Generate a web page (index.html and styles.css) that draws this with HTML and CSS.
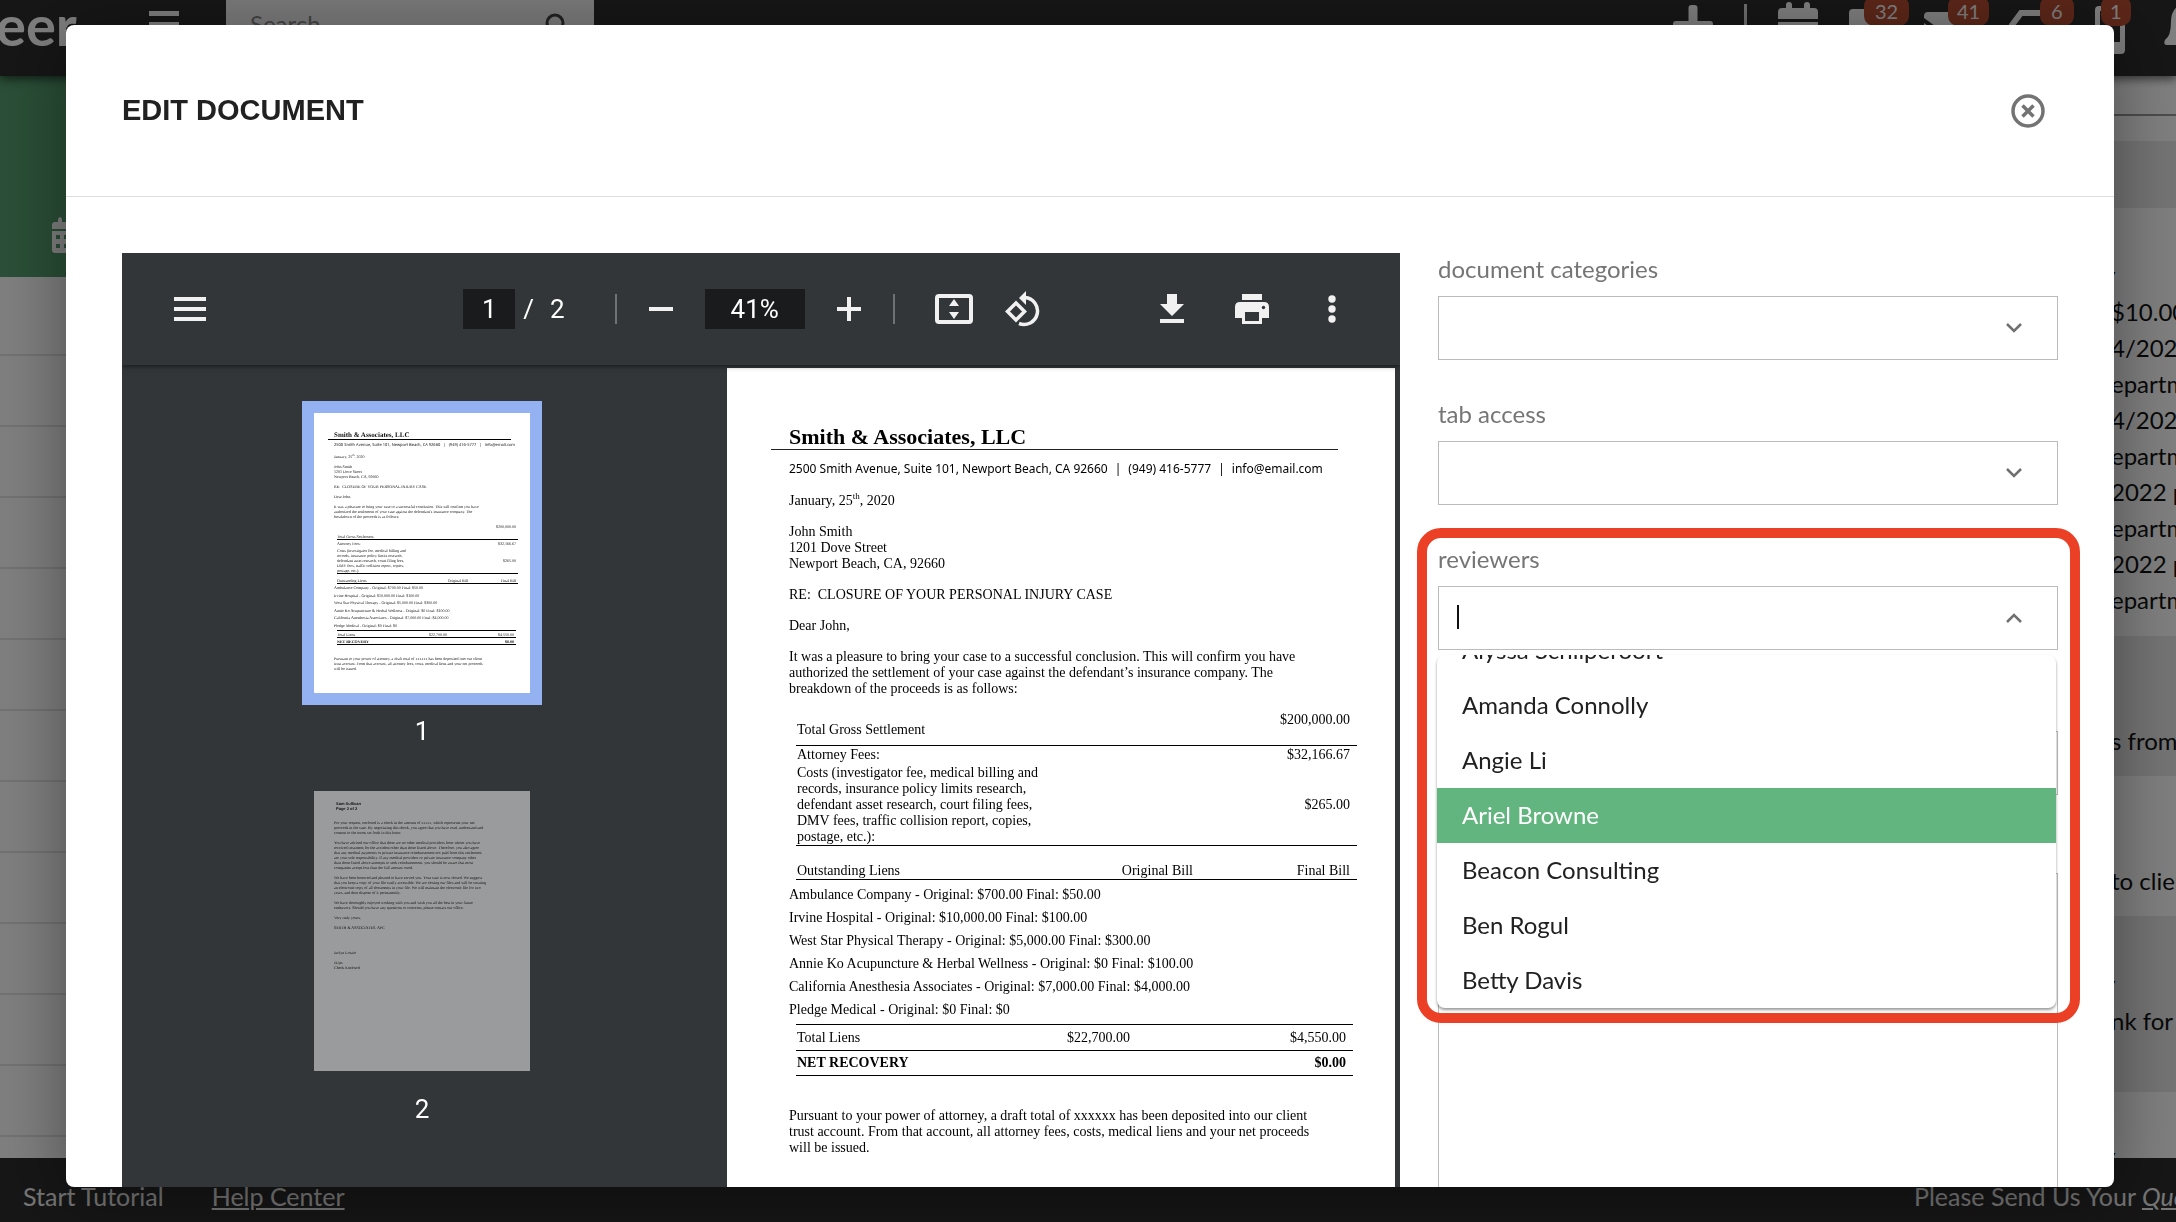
FILE: index.html
```html
<!DOCTYPE html>
<html lang="en">
<head>
    <meta charset="UTF-8">
    <title>Edit Document</title>
    <link rel="stylesheet" href="styles.css">
</head>
<body>
    <div class="app">
        <header class="topbar">
            <div class="logo">eer</div>
            <button class="top-icon menu-toggle" aria-label="Menu">
                <svg width="30" height="28" viewBox="0 0 30 28" fill="#fff"><path d="M0 0h30v5H0zM0 11h30v5H0zM0 22h30v5H0z"/></svg>
            </button>
            <div class="search">
                <input type="text" placeholder="Search" aria-label="Search">
                <svg width="26" height="30" viewBox="0 0 26 30" fill="none" stroke="#444" stroke-width="3"><circle cx="11" cy="10" r="8"/><path d="M16 17l8 9"/></svg>
            </div>
            <div class="top-actions">
                <button class="top-icon" aria-label="Add">
                    <svg width="40" height="56" viewBox="0 0 40 56" fill="#fff"><rect x="15.500" y="5" width="9" height="41" rx="3"/><rect x="0" y="21" width="40" height="9" rx="3"/></svg>
                </button>
                <span class="top-divider"></span>
                <button class="top-icon" aria-label="Calendar">
                    <svg width="40" height="56" viewBox="0 0 40 56" fill="#fff"><path d="M4 8h4V5a2 2 0 0 1 6 0v3h12V5a2 2 0 0 1 6 0v3h4q4 0 4 4v7H0v-7q0-4 4-4zM0 22h40v18q0 4-4 4H4q-4 0-4-4z"/></svg>
                </button>
                <button class="top-icon" aria-label="Messages">
                    <svg width="44" height="56" viewBox="0 0 44 56" fill="#fff"><path d="M4 9h36q4 0 4 4v22q0 4-4 4H18L8 48v-9H4q-4 0-4-4V13q0-4 4-4z"/></svg>
                    <span class="badge">32</span>
                </button>
                <button class="top-icon" aria-label="Mail">
                    <svg width="44" height="56" viewBox="0 0 44 56" fill="#fff"><path d="M4 12h36q4 0 4 4v2L22 34 0 18v-2q0-4 4-4zM0 23l22 16 22-16v21H0z"/></svg>
                    <span class="badge badge-mail">41</span>
                </button>
                <button class="top-icon" aria-label="Tasks">
                    <svg width="65" height="56" viewBox="0 0 65 56" fill="none" stroke="#fff" stroke-width="6"><path d="M4 42l9-17 9-12h35v30z"/></svg>
                    <span class="badge badge-tasks">6</span>
                </button>
                <button class="top-icon" aria-label="Texts">
                    <svg width="30" height="56" viewBox="0 0 30 56" fill="none"><path fill="#fff" fill-rule="evenodd" d="M4 6h22q4 0 4 4v40q0 4-4 4H4q-4 0-4-4V10q0-4 4-4zM5 11v31h20V11z"/><circle cx="15" cy="48" r="3" fill="#2d2d2d"/></svg>
                    <span class="badge badge-texts">1</span>
                </button>
                <button class="top-icon" aria-label="Alerts">
                    <svg width="48" height="56" viewBox="0 0 48 56" fill="#fff"><path d="M27 4q-12 3-12 18 0 14-6 18-2 5 2 5h32q4 0 2-5-6-4-6-18 0-15-12-18z"/></svg>
                </button>
            </div>
        </header>

        <div class="page">
            <nav class="side-nav">
                <div class="side-head">
                    <svg width="32" height="36" viewBox="0 0 32 36" fill="#fff"><path fill-rule="evenodd" d="M3 5h3V2q2-4 4 0v3h12V2q2-4 4 0v3h3q3 0 3 3v4H0V8q0-3 3-3zM0 14h32v19q0 3-3 3H3q-3 0-3-3zM4 18v4h4v-4zM12 18v4h4v-4zM20 18v4h4v-4zM4 27v4h4v-4zM12 27v4h4v-4zM20 27v4h4v-4z"/></svg>
                </div>
                <ul class="side-rows">
                    <li></li><li></li><li></li><li></li><li></li><li></li>
                    <li></li><li></li><li></li><li></li><li></li><li></li>
                </ul>
            </nav>
            <section class="activity">
                <div class="activity-head"></div>
                <div class="activity-tabs"></div>
                <div class="entry entry-long">
                    <b>y</b>
                    <p>$10.00</p>
                    <p>4/2023</p>
                    <p>epartment</p>
                    <p>4/2021</p>
                    <p>epartment</p>
                    <p>2022 pa</p>
                    <p>epartment</p>
                    <p>2022 pa</p>
                    <p>epartment</p>
                </div>
                <div class="entry entry-alt"><p>s from</p></div>
                <div class="entry"><p>to client</p></div>
                <div class="entry entry-alt entry-tall"><b>y</b><p>nk for</p></div>
                <div class="entry entry-last"><b>y</b></div>
            </section>
        </div>

        <footer class="bottombar">
            <span>Start Tutorial</span>
            <a href="#">Help Center</a>
            <span class="feedback">Please Send Us Your <a href="#"><i>Questions</i></a></span>
        </footer>
    </div>

    <div class="overlay">
        <div class="modal" role="dialog" aria-labelledby="modal-title">
            <div class="modal-header">
                <h1 id="modal-title">EDIT DOCUMENT</h1>
                <button class="close" aria-label="Close">
                    <svg width="34" height="34" viewBox="0 0 34 34" fill="none" stroke="#737373"><circle cx="17" cy="17" r="15" stroke-width="3.500"/><path stroke-width="3.500" d="M11.500 11.500l11 11M22.500 11.500l-11 11"/></svg>
                </button>
            </div>

            <div class="modal-body">
                <!-- pdf viewer -->
                <div class="viewer">
                    <div class="toolbar">
                        <div class="tools-left">
                            <button aria-label="Toggle sidebar"><svg width="32" height="24" viewBox="0 0 32 24" fill="#f1f1f1"><path d="M0 0h32v4H0zM0 10h32v4H0zM0 20h32v4H0z"/></svg></button>
                        </div>
                        <div class="tools-center">
                            <input class="page-input" type="text" value="1" aria-label="Page">
                            <span class="slash">/</span>
                            <span class="page-total">2</span>
                            <span class="tool-divider"></span>
                            <button aria-label="Zoom out"><svg width="24" height="24" viewBox="0 0 24 24" fill="#f1f1f1"><path d="M0 10h24v4H0z"/></svg></button>
                            <input class="zoom-input" type="text" value="41%" aria-label="Zoom">
                            <button aria-label="Zoom in"><svg width="24" height="24" viewBox="0 0 24 24" fill="#f1f1f1"><path d="M10 0h4v10h10v4H14v10h-4V14H0v-4h10z"/></svg></button>
                            <span class="tool-divider"></span>
                            <button class="fit" aria-label="Fit to page"><svg width="38" height="30" viewBox="0 0 38 30" fill="#f1f1f1"><rect x="2" y="2" width="34" height="26" rx="2" fill="none" stroke="#f1f1f1" stroke-width="4"/><path d="M19 5l5 7H14zM19 25l5-7H14z"/></svg></button>
                            <button class="rotate" aria-label="Rotate"><svg width="36" height="36" viewBox="0 0 36 36" fill="none" stroke="#f1f1f1" stroke-width="3.500"><path d="M11 12l8.500 8.500L11 29l-8.500-8.500z"/><path d="M20 6.500a13.500 13.500 0 1 1-6 26"/><path d="M21 0v14l-7-7z" fill="#f1f1f1" stroke="none"/></svg></button>
                        </div>
                        <div class="tools-right">
                            <button aria-label="Download"><svg width="24" height="30" viewBox="0 0 24 30" fill="#f1f1f1"><path d="M7 0h10v10h7L12 22 0 10h7zM0 25h24v4H0z"/></svg></button>
                            <button aria-label="Print"><svg width="34" height="30" viewBox="0 0 34 30" fill="#f1f1f1"><path d="M7 0h20v6H7z"/><path fill-rule="evenodd" d="M5 8h24q5 0 5 5v11h-7v6H7v-6H0V13q0-5 5-5zM10 18v9h14v-9z"/><circle cx="28.500" cy="13.500" r="1.700" fill="#323639"/></svg></button>
                            <button aria-label="More"><svg width="8" height="28" viewBox="0 0 8 28" fill="#f1f1f1"><circle cx="4" cy="4" r="3.700"/><circle cx="4" cy="14" r="3.700"/><circle cx="4" cy="24" r="3.700"/></svg></button>
                        </div>
                    </div>

                    <div class="viewer-body">
                        <aside class="thumbs">
                            <figure class="thumb selected">
                                <div class="mini">
                                    <h3>Smith &amp; Associates, LLC</h3>
                                    <p class="mini-address">2500 Smith Avenue, Suite 101, Newport Beach, CA 92660 &nbsp; | &nbsp; (949) 416-5777 &nbsp; | &nbsp; info@email.com</p>
                                    <p>January, 25<sup>th</sup>, 2020</p>
                                    <p>John Smith<br>1201 Dove Street<br>Newport Beach, CA, 92660</p>
                                    <p>RE: &nbsp;CLOSURE OF YOUR PERSONAL INJURY CASE</p>
                                    <p>Dear John,</p>
                                    <p>It was a pleasure to bring your case to a successful conclusion. This will confirm you have<br>authorized the settlement of your case against the defendant’s insurance company. The<br>breakdown of the proceeds is as follows:</p>
                                    <table>
                                        <tr class="gross ruled"><td>Total Gross Settlement</td><td></td><td>$200,000.00</td></tr>
                                        <tr class="fees"><td>Attorney Fees:</td><td></td><td>$32,166.67</td></tr>
                                        <tr class="costs ruled"><td>Costs (investigator fee, medical billing and<br>records, insurance policy limits research,<br>defendant asset research, court filing fees,<br>DMV fees, traffic collision report, copies,<br>postage, etc.):</td><td></td><td>$265.00</td></tr>
                                        <tr class="liens-head ruled"><td>Outstanding Liens</td><td>Original Bill</td><td>Final Bill</td></tr>
                                    </table>
                                    <ul>
                                        <li>Ambulance Company - Original: $700.00 Final: $50.00</li>
                                        <li>Irvine Hospital - Original: $10,000.00 Final: $100.00</li>
                                        <li>West Star Physical Therapy - Original: $5,000.00 Final: $300.00</li>
                                        <li>Annie Ko Acupuncture &amp; Herbal Wellness - Original: $0 Final: $100.00</li>
                                        <li>California Anesthesia Associates - Original: $7,000.00 Final: $4,000.00</li>
                                        <li>Pledge Medical - Original: $0 Final: $0</li>
                                    </ul>
                                    <table class="totals">
                                        <tr class="ruled"><td>Total Liens</td><td>$22,700.00</td><td>$4,550.00</td></tr>
                                        <tr class="ruled net"><td>NET RECOVERY</td><td></td><td>$0.00</td></tr>
                                    </table>
                                    <p>Pursuant to your power of attorney, a draft total of xxxxxx has been deposited into our client<br>trust account. From that account, all attorney fees, costs, medical liens and your net proceeds<br>will be issued.</p>
                                </div>
                                <figcaption>1</figcaption>
                            </figure>
                            <figure class="thumb">
                                <div class="mini mini-second">
                                    <p class="mini-top">Sam Sullivan<br>Page 2 of 2</p>
                                    <p>Per your request, enclosed is a check in the amount of xxxxx, which represents your net<br>proceeds in the case. By negotiating this check, you agree that you have read, understand and<br>consent to the terms set forth in this letter.</p>
                                    <p>You have advised our office that there are no other medical providers from whom you have<br>received treatment for the accident other than those listed above. Therefore, you also agree<br>that any medical payments or private insurance reimbursement not paid from this settlement<br>are your sole responsibility. If any medical providers or private insurance company other<br>than those listed above attempts to seek reimbursement, you should be aware that most<br>companies accept less than the full amount owed.</p>
                                    <p>We have been honored and pleased to have served you. Your case is now closed. We suggest<br>that you keep a copy of your file easily accessible. We are closing our files and will be creating<br>an electronic copy of all documents in your file. We will maintain the electronic file for two<br>years, and then dispose of it permanently.</p>
                                    <p>We have thoroughly enjoyed working with you and wish you all the best in your future<br>endeavors. Should you have any questions or concerns, please contact our office.</p>
                                    <p>Very truly yours,</p>
                                    <p class="mini-firm">SMITH &amp; ASSOCIATES, APC</p>
                                    <p>Jaclyn Loraio</p>
                                    <p>JL/ps<br>Check Enclosed</p>
                                </div>
                                <figcaption>2</figcaption>
                            </figure>
                        </aside>

                        <article class="letter">
                            <h2>Smith &amp; Associates, LLC</h2>
                            <p class="address"><span>2500 Smith Avenue, Suite 101, Newport Beach, CA 92660</span><span>|</span><span>(949) 416-5777</span><span>|</span><span>info@email.com</span></p>
                            <p>January, 25<sup>th</sup>, 2020</p>
                            <p>John Smith<br>1201 Dove Street<br>Newport Beach, CA, 92660</p>
                            <p>RE: &nbsp;CLOSURE OF YOUR PERSONAL INJURY CASE</p>
                            <p>Dear John,</p>
                            <p>It was a pleasure to bring your case to a successful conclusion. This will confirm you have<br>authorized the settlement of your case against the defendant’s insurance company. The<br>breakdown of the proceeds is as follows:</p>
                            <table>
                                <tr class="gross ruled"><td>Total Gross Settlement</td><td></td><td>$200,000.00</td></tr>
                                <tr class="fees"><td>Attorney Fees:</td><td></td><td>$32,166.67</td></tr>
                                <tr class="costs ruled"><td>Costs (investigator fee, medical billing and<br>records, insurance policy limits research,<br>defendant asset research, court filing fees,<br>DMV fees, traffic collision report, copies,<br>postage, etc.):</td><td></td><td>$265.00</td></tr>
                                <tr class="liens-head ruled"><td>Outstanding Liens</td><td>Original Bill</td><td>Final Bill</td></tr>
                            </table>
                            <ul>
                                <li>Ambulance Company - Original: $700.00 Final: $50.00</li>
                                <li>Irvine Hospital - Original: $10,000.00 Final: $100.00</li>
                                <li>West Star Physical Therapy - Original: $5,000.00 Final: $300.00</li>
                                <li>Annie Ko Acupuncture &amp; Herbal Wellness - Original: $0 Final: $100.00</li>
                                <li>California Anesthesia Associates - Original: $7,000.00 Final: $4,000.00</li>
                                <li>Pledge Medical - Original: $0 Final: $0</li>
                            </ul>
                            <table class="totals">
                                <tr class="ruled"><td>Total Liens</td><td>$22,700.00</td><td>$4,550.00</td></tr>
                                <tr class="ruled net"><td>NET RECOVERY</td><td></td><td>$0.00</td></tr>
                            </table>
                            <p>Pursuant to your power of attorney, a draft total of xxxxxx has been deposited into our client<br>trust account. From that account, all attorney fees, costs, medical liens and your net proceeds<br>will be issued.</p>
                        </article>
                    </div>
                </div>

                <!-- document fields -->
                <form class="fields">
                    <div class="field">
                        <label for="categories">document categories</label>
                        <div class="control">
                            <select id="categories"><option></option></select>
                            <svg class="chevron" width="16" height="10" viewBox="0 0 16 10" fill="none" stroke="#707070" stroke-width="2.500"><path d="M1 1l7 7 7-7"/></svg>
                        </div>
                    </div>
                    <div class="field">
                        <label for="tabs">tab access</label>
                        <div class="control">
                            <select id="tabs"><option></option></select>
                            <svg class="chevron" width="16" height="10" viewBox="0 0 16 10" fill="none" stroke="#707070" stroke-width="2.500"><path d="M1 1l7 7 7-7"/></svg>
                        </div>
                    </div>
                    <div class="field highlighted">
                        <label for="reviewers">reviewers</label>
                        <div class="control">
                            <input id="reviewers" type="text" role="combobox" aria-expanded="true" aria-controls="reviewer-list">
                            <span class="caret"></span>
                            <svg class="chevron" width="16" height="10" viewBox="0 0 16 10" fill="none" stroke="#707070" stroke-width="2.500"><path d="M1 9l7-7 7 7"/></svg>
                            <ul class="options" id="reviewer-list" role="listbox">
                                <li role="option">Alyssa Schilperoort</li>
                                <li role="option">Amanda Connolly</li>
                                <li role="option">Angie Li</li>
                                <li role="option" class="active" aria-selected="true">Ariel Browne</li>
                                <li role="option">Beacon Consulting</li>
                                <li role="option">Ben Rogul</li>
                                <li role="option">Betty Davis</li>
                            </ul>
                        </div>
                    </div>
                    <div class="field unlabelled">
                        <div class="control"><input type="text" aria-label="Title"></div>
                    </div>
                    <div class="field unlabelled notes">
                        <textarea aria-label="Notes"></textarea>
                    </div>
                </form>
            </div>
        </div>
    </div>
</body>
</html>
```
FILE: styles.css
```css
* {
    box-sizing: border-box;
}
body {
    margin: 0;
    height: 100vh;
    overflow: hidden;
    font-family: Lato, sans-serif;
    font-size: 24px;
    line-height: 36px;
    color: #212121;
    background: #fff;
}
p, h1, h2, h3, ul, figure {
    margin: 0;
    padding: 0;
}
ul {
    list-style: none;
}
button {
    border: 0;
    padding: 0;
    background: none;
    cursor: pointer;
}
svg {
    display: block;
    flex-shrink: 0;
}

/* page behind the dialog */
.app {
    height: 100vh;
    display: flex;
    flex-direction: column;
    overflow: hidden;
}
.topbar {
    display: flex;
    align-items: flex-start;
    height: 76px;
    flex-shrink: 0;
    background: #2d2d2d;
    box-shadow: 0 3px 9px rgba(0, 0, 0, 0.6);
    position: relative;
    z-index: 1;
}
.logo {
    width: 153px;
    margin-left: -4px;
    font-size: 56px;
    font-weight: bold;
    line-height: 50px;
    color: #fff;
}
.top-icon {
    position: relative;
}
.menu-toggle {
    padding-top: 11px;
    margin-right: 47px;
}
.search {
    display: flex;
    width: 368px;
    padding: 13px 24px 10px;
    background: #f7f7f7;
}
.search input {
    flex: 1;
    min-width: 0;
    border: 0;
    padding: 0;
    height: 21px;
    font: 24px/21px Lato, sans-serif;
    background: none;
}
.search input::placeholder {
    color: #8a8a8a;
}
.top-actions {
    display: flex;
    gap: 31px;
    margin-left: auto;
    margin-right: -28px;
}
.top-divider {
    width: 3px;
    height: 44px;
    margin-top: 4px;
    background: #ddd;
}
.badge {
    position: absolute;
    top: -4px;
    left: 15px;
    min-width: 29px;
    padding: 0 11px;
    border-radius: 10px;
    font: 20px/30px Lato, sans-serif;
    color: #fff;
    background: #ba4e32;
}
.badge-mail {
    left: 24px;
    padding: 0 9px;
}
.badge-tasks {
    left: 41px;
}
.badge-texts {
    left: 6px;
    padding: 0 9px;
}
.page {
    flex: 1;
    min-height: 0;
    display: flex;
    justify-content: space-between;
    overflow: hidden;
}
.side-nav {
    width: 330px;
}
.side-head {
    height: 201px;
    padding: 141px 52px 0;
    background: #559e6f;
}
.side-rows {
    padding-top: 8px;
}
.side-rows li {
    height: 71px;
    border-bottom: 2px solid #e4e4e4;
}
.activity {
    width: 276px;
    white-space: nowrap;
    overflow: hidden;
    color: #111;
}
.activity-head {
    height: 40px;
    border-bottom: 2px solid #999;
}
.activity-tabs {
    height: 92px;
    margin-top: 25px;
    border-bottom: 25px solid #fff;
    background: #e8e8e8;
}
.entry {
    height: 140px;
    padding: 87px 0 0 211px;
}
.entry b {
    display: block;
    margin-left: -8px;
    font-style: italic;
}
.entry-long {
    height: 403px;
    padding-top: 25px;
}
.entry-alt {
    background: #e8e8e8;
}
.entry-tall {
    height: 176px;
    padding-top: 51px;
}
.entry-last {
    padding-top: 47px;
}
.bottombar {
    display: flex;
    gap: 48px;
    height: 64px;
    padding: 20px 0 0 23px;
    flex-shrink: 0;
    font-size: 25px;
    color: #eee;
    background: #2d2d2d;
    white-space: nowrap;
}
.bottombar a {
    color: #eee;
}
.feedback {
    width: 262px;
    margin-left: auto;
    overflow: hidden;
}

/* dialog */
.overlay {
    position: fixed;
    inset: 0;
    z-index: 10;
    display: flex;
    padding: 25px 62px 35px 66px;
    background: rgba(0, 0, 0, 0.5);
}
.modal {
    flex: 1;
    min-width: 0;
    display: flex;
    flex-direction: column;
    overflow: hidden;
    border-radius: 8px;
    background: #fff;
    box-shadow: 0 10px 70px rgba(0, 0, 0, 0.4);
}
.modal-header {
    display: flex;
    align-items: center;
    justify-content: space-between;
    height: 172px;
    padding: 0 69px 0 56px;
    flex-shrink: 0;
    border-bottom: 1px solid #dedede;
}
.modal-header h1 {
    padding-bottom: 2px;
    font: bold 29px/36px "Liberation Sans", Arial, sans-serif;
}
.modal-body {
    flex: 1;
    min-height: 0;
    display: flex;
    gap: 38px;
    padding: 56px 56px 0;
}

/* pdf viewer */
.viewer {
    flex: 1278 1 0;
    min-width: 0;
    display: flex;
    flex-direction: column;
    overflow: hidden;
    background: #323639;
}
.toolbar {
    display: flex;
    align-items: center;
    height: 112px;
    flex-shrink: 0;
    color: #fff;
    font: 26px/40px Roboto, sans-serif;
    box-shadow: 0 1px 5px rgba(0, 0, 0, 0.6);
    position: relative;
}
.tools-left, .tools-right {
    flex: 1;
    display: flex;
    align-items: center;
}
.tools-left {
    padding-left: 52px;
}
.tools-center {
    display: flex;
    align-items: center;
    gap: 32px;
    padding-right: 6px;
}
.tools-right {
    justify-content: flex-end;
    gap: 51px;
    padding-right: 64px;
}
.tools-right button:last-child {
    padding-left: 8px;
}
.page-input, .zoom-input {
    height: 40px;
    border: 0;
    padding: 0;
    text-align: center;
    font: 26px/40px Roboto, sans-serif;
    color: #fff;
    background: #191b1c;
}
.page-input {
    width: 52px;
}
.zoom-input {
    width: 100px;
}
.slash {
    margin-left: -24px;
}
.page-total {
    margin-left: -16px;
    margin-right: 18px;
}
.tool-divider {
    width: 2px;
    height: 30px;
    background: #6f7274;
}
.fit {
    margin-left: 8px;
}
.viewer-body {
    flex: 1;
    min-height: 0;
    display: flex;
    padding-right: 5px;
}
.thumbs {
    width: 600px;
    margin-right: 5px;
    display: flex;
    flex-direction: column;
    align-items: center;
    gap: 20px;
    padding-top: 36px;
}
.thumb {
    height: 346px;
    padding: 12px 12px 0;
    flex-shrink: 0;
}
.thumb + .thumb {
    margin-top: 12px;
}
.thumb figcaption {
    margin-top: 18px;
    text-align: center;
    font: 26px/40px Roboto, sans-serif;
    color: #fff;
}
.selected .mini {
    box-shadow: 0 0 0 12px #94b1f1;
}

/* small page previews */
.mini {
    width: 216px;
    height: 280px;
    padding: 18px 12px 0 20px;
    overflow: hidden;
    white-space: nowrap;
    background: #fff;
    color: #111;
    font: 4px/5px "Liberation Serif", serif;
    text-rendering: geometricPrecision;
}
.mini h3 {
    font-size: 7px;
    line-height: 8px;
    margin: 0 7px 0 -6px;
    padding-left: 6px;
    border-bottom: 1px solid #000;
}
.mini p {
    margin-bottom: 5px;
}
.mini .mini-address {
    margin: 3px 0 6px;
    font-family: "Noto Sans", sans-serif;
}
.mini sup {
    font-size: 3px;
    line-height: 0;
}
.mini table {
    width: 181px;
    margin-left: 3px;
}
.mini .gross td {
    height: 15px;
}
.mini .fees td, .mini .costs td {
    padding-top: 1px;
}
.mini .fees td {
    height: 8px;
}
.mini .liens-head td {
    height: 10px;
}
.mini td:nth-child(2) {
    width: 24px;
}
.mini td:nth-child(3) {
    width: 50px;
    padding-right: 2px;
}
.mini ul {
    display: flex;
    flex-direction: column;
    justify-content: space-between;
    height: 43px;
    margin: 1px 0 2px;
}
.mini .totals {
    width: 179px;
    margin-bottom: 11px;
}
.mini .totals td {
    height: 7px;
    vertical-align: middle;
}
.mini .totals td:nth-child(3) {
    width: 69px;
}
.mini-second {
    padding-top: 10px;
    background: #9a9b9c;
}
.mini .mini-top {
    margin: 0 0 9px 2px;
    font: bold 4px/5px "Liberation Sans", sans-serif;
}
.mini .mini-firm {
    margin-bottom: 20px;
}

/* letter page */
.letter {
    flex: 1;
    min-width: 0;
    margin-top: 3px;
    padding: 58px 38px 0 62px;
    overflow: hidden;
    white-space: nowrap;
    background: #fff;
    color: #000;
    font: 14px/16px "Liberation Serif", "Times New Roman", serif;
}
.letter h2 {
    margin: 0 19px 0 -18px;
    padding: 0 0 2px 18px;
    font-size: 22px;
    line-height: 21px;
    border-bottom: 1px solid #222;
}
.letter p {
    margin-bottom: 15px;
}
.letter .address {
    display: flex;
    gap: 7px;
    margin: 11px 0 16px;
    font: 12px/16px "Noto Sans", sans-serif;
}
.letter sup {
    font-size: 9px;
    line-height: 0;
}
table {
    border-collapse: collapse;
    table-layout: fixed;
}
td {
    padding: 0;
}
td:nth-child(n+2) {
    text-align: right;
}
.ruled td {
    border-bottom: 1px solid #000;
}
.gross td, .liens-head td {
    vertical-align: bottom;
}
.gross td:last-child {
    vertical-align: top;
}
.net {
    font-weight: bold;
}
.letter table {
    width: 561px;
    margin: -15px 0 3px 7px;
}
.letter td {
    padding: 0 7px 0 1px;
}
.letter td:nth-child(2) {
    width: 80px;
}
.letter td:nth-child(3) {
    width: 157px;
}
.letter .gross td {
    height: 48px;
    padding-bottom: 7px;
}
.letter .gross td:last-child {
    padding-top: 15px;
}
.letter .fees td {
    height: 20px;
}
.letter .liens-head td {
    height: 34px;
}
.letter li {
    line-height: 23px;
}
.letter .totals {
    width: 557px;
    margin: 3px 0 32px 7px;
}
.totals tr:first-child td {
    border-top: 1px solid #000;
}
.letter .totals td {
    height: 25px;
}
.letter .totals tr:first-child td {
    height: 26px;
}
.letter .totals td:nth-child(3) {
    width: 216px;
}

/* form column */
.fields {
    flex: 620 1 0;
    min-width: 0;
    display: flex;
    flex-direction: column;
}
.field {
    position: relative;
    height: 145px;
    flex-shrink: 0;
}
.field label {
    display: block;
    height: 43px;
    line-height: 32px;
    color: #757575;
}
.control {
    position: relative;
}
.control select, .control input, .notes textarea {
    display: block;
    width: 100%;
    height: 64px;
    padding: 0 20px;
    border: 1px solid #bbb;
    border-radius: 0;
    outline: 0;
    appearance: none;
    background: #fff;
    font: 24px/36px Lato, sans-serif;
}
.chevron {
    position: absolute;
    top: 27px;
    right: 36px;
}
.caret {
    position: absolute;
    top: 19px;
    left: 19px;
    width: 2px;
    height: 24px;
    background: #111;
}
/* red ring round the reviewers field and its open list */
.highlighted::before {
    content: "";
    position: absolute;
    inset: -15px -22px -335px -21px;
    border: 10px solid #eb4026;
    border-radius: 24px;
    z-index: 3;
    pointer-events: none;
}
.options {
    position: absolute;
    z-index: 2;
    top: 69px;
    left: -1px;
    right: 2px;
    height: 353px;
    display: flex;
    flex-direction: column;
    justify-content: flex-end;
    overflow: hidden;
    border-radius: 8px;
    background: #fff;
    box-shadow: 0 2px 3px rgba(0, 0, 0, 0.4);
}
.options li {
    flex-shrink: 0;
    height: 55px;
    padding-left: 25px;
    line-height: 53px;
}
.options .active {
    color: #fff;
    background: #63b57f;
}
.unlabelled {
    padding-top: 43px;
}
.notes {
    flex: 1;
    padding-top: 40px;
}
.notes textarea {
    height: 100%;
    border-bottom: 0;
    resize: none;
}
```
